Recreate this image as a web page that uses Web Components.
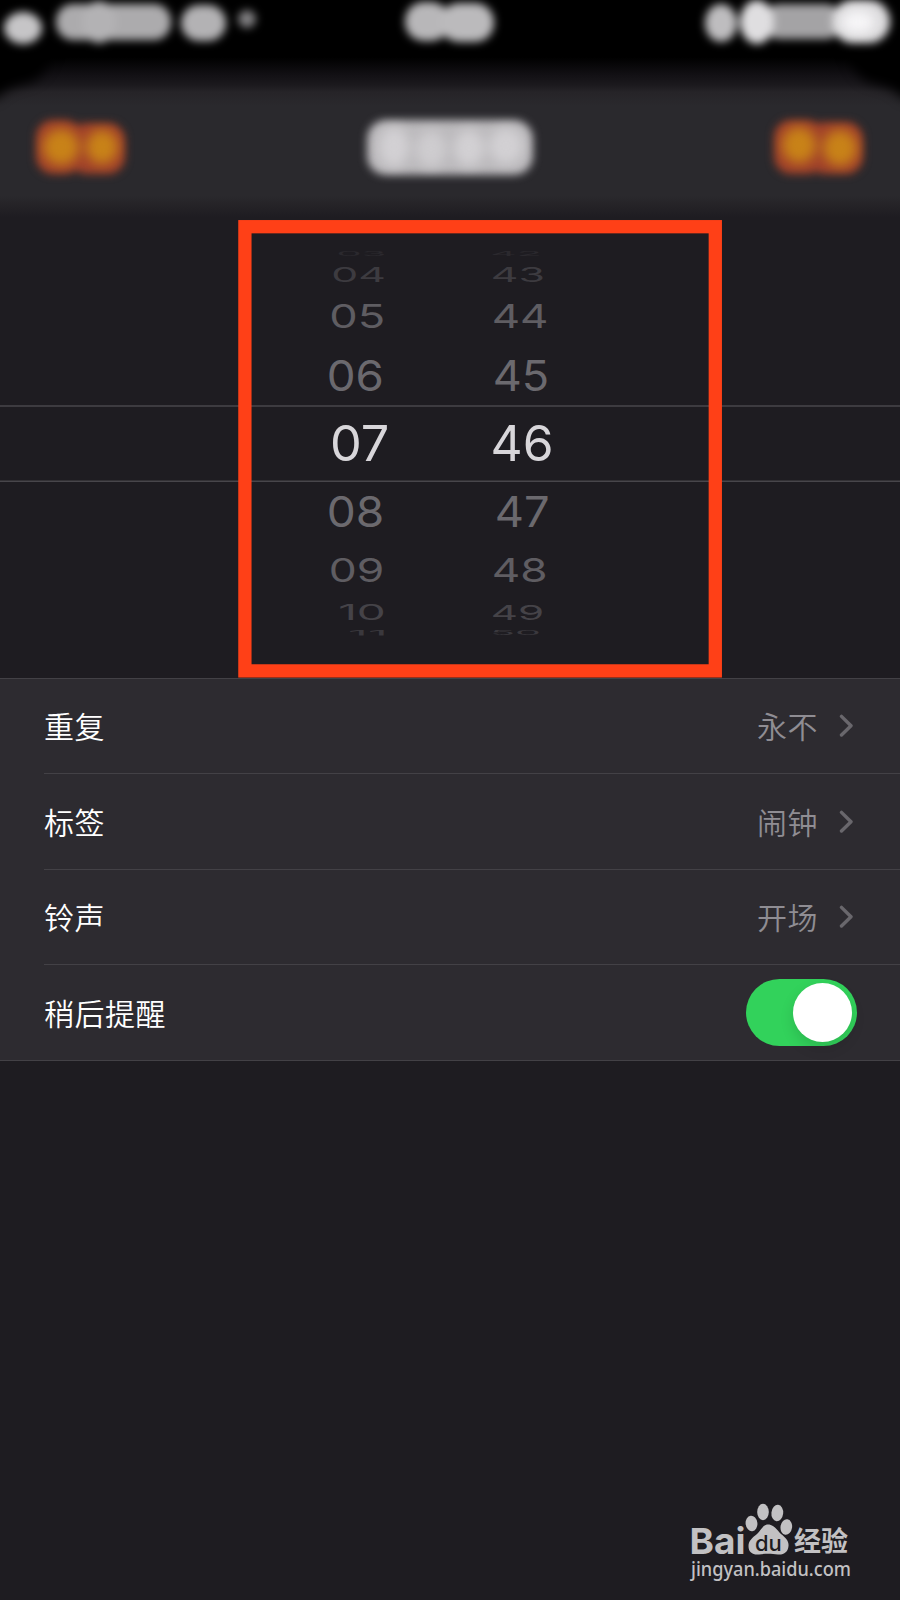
<!DOCTYPE html>
<html lang="zh-CN">
<head>
<meta charset="utf-8">
<title>闹钟</title>
<style>
  body {
    margin: 0;
    background: #1e1c21;
    font-family: "Noto Sans CJK SC", sans-serif;
    color: #fff;
  }
</style>
</head>
<body>
<alarm-screen></alarm-screen>

<script>
class SheetHeader extends HTMLElement {
  constructor() {
    super();
    this.attachShadow({ mode: "open" });
  }

  connectedCallback() {
    this.shadowRoot.innerHTML = `
      <style>
        :host { display: block; height: 220px; overflow: hidden; }
        svg { display: block; }
        filter { color-interpolation-filters: sRGB; }
      </style>
      <svg width="900" height="220" viewBox="0 0 900 220">
        <defs>
          <linearGradient id="sheet" x1="0" y1="0" x2="0" y2="1">
            <stop offset="0" stop-color="#000"/>
            <stop offset=".26" stop-color="#000"/>
            <stop offset=".34" stop-color="#121014"/>
            <stop offset=".385" stop-color="#1b191d"/>
            <stop offset=".42" stop-color="#262428"/>
            <stop offset=".48" stop-color="#2a292d"/>
            <stop offset=".89" stop-color="#2a292d"/>
            <stop offset=".94" stop-color="#242226"/>
            <stop offset=".99" stop-color="#1e1c21"/>
            <stop offset="1" stop-color="#1e1c21"/>
          </linearGradient>
          <filter id="soft" x="-30%" y="-50%" width="160%" height="200%"><feGaussianBlur stdDeviation="4.5"/></filter>
          <filter id="edge" x="-100%" y="-100%" width="300%" height="300%"><feGaussianBlur stdDeviation="6"/></filter>
          <filter id="glow" x="-50%" y="-50%" width="200%" height="200%"><feGaussianBlur stdDeviation="6"/></filter>
        </defs>
        <rect width="900" height="220" fill="url(#sheet)"/>
        <g filter="url(#edge)">
          <path d="M-30 40H56Q48 78 28 83Q8 86 -4 99H-30Z"/>
          <path d="M930 40H844Q852 78 872 83Q892 86 904 99H930Z"/>
        </g>
        <!-- status bar -->
        <g filter="url(#soft)">
          <ellipse cx="23" cy="28" rx="19" ry="16" fill="#c6c5c7"/>
          <rect x="56" y="4" width="115" height="36" rx="17" fill="#acabad"/>
          <ellipse cx="99" cy="22" rx="17" ry="21" fill="#b3b2b4"/>
          <rect x="181" y="5" width="45" height="36" rx="18" fill="#b3b2b4"/>
          <circle cx="247" cy="19" r="9" fill="#807f81"/>
          <rect x="405" y="2" width="45" height="39" rx="19" fill="#b8b7b9"/>
          <rect x="440" y="3" width="54" height="39" rx="19" fill="#bbbabc"/>
          <ellipse cx="721" cy="23" rx="16" ry="19" fill="#bebdbf"/>
          <rect x="765" y="4" width="75" height="35" rx="14" fill="#a4a3a5"/>
          <ellipse cx="757" cy="22" rx="17" ry="22" fill="#dfdee0"/>
          <rect x="832" y="0" width="58" height="43" rx="21" fill="#dcdbdd"/>
        </g>
        <ellipse cx="858" cy="22" rx="17" ry="12" fill="#f6f5f7" filter="url(#glow)"/>
        <!-- cancel / title / save -->
        <g filter="url(#soft)">
          <rect x="36" y="120" width="46" height="54" rx="17" fill="#a2422a"/>
          <rect x="70" y="123" width="55" height="51" rx="17" fill="#a2422a"/>
          <rect x="774" y="120" width="50" height="54" rx="17" fill="#a2422a"/>
          <rect x="808" y="122" width="55" height="52" rx="17" fill="#a2422a"/>
          <rect x="367" y="120" width="166" height="55" rx="19" fill="#bcbabd"/>
        </g>
        <g filter="url(#glow)">
          <ellipse cx="394" cy="147" rx="15" ry="20" fill="#d2d0d3"/>
          <ellipse cx="431" cy="149" rx="15" ry="18" fill="#cecccf"/>
          <ellipse cx="469" cy="148" rx="15" ry="18" fill="#d2d0d3"/>
          <ellipse cx="506" cy="146" rx="17" ry="18" fill="#d2d0d3"/>
        </g>
        <g filter="url(#glow)" fill="#c88218">
          <ellipse cx="61" cy="147" rx="18" ry="18"/>
          <ellipse cx="102" cy="147" rx="16" ry="17"/>
          <ellipse cx="799" cy="145" rx="17" ry="18"/>
          <ellipse cx="840" cy="148" rx="17" ry="18"/>
        </g>
      </svg>`;
  }
}

// Ink box of every number on the wheel: [text, left, right, top, bottom, colour]
const HOURS = [
  ["03", 338, 384, 250.5, 255.5, "#2b292e"],
  ["04", 333, 384, 266.5, 281.5, "#3d3b40"],
  ["05", 331, 383, 303.5, 328, "#5f5d62"],
  ["06", 328.5, 382, 359.5, 390.5, "#6b696e"],
  ["07", 332, 387, 424.5, 461, "#d8d6da"],
  ["08", 328.5, 381.5, 495.5, 527, "#6b696e"],
  ["09", 330.5, 382.5, 557.5, 582, "#5f5d62"],
  ["10", 340, 383.5, 604, 619.5, "#454348"],
  ["11", 350, 383.5, 630, 637, "#3a383d"]
];
const MINUTES = [
  ["42", 492, 539, 250.5, 255.5, "#2b292e"],
  ["43", 492.5, 542.5, 266.5, 281.5, "#3d3b40"],
  ["44", 493.5, 546.5, 303.5, 328, "#5f5d62"],
  ["45", 494.5, 547, 359.5, 390.5, "#6b696e"],
  ["46", 492.5, 551.5, 424.5, 461, "#d8d6da"],
  ["47", 496.5, 547.5, 495.5, 527, "#6b696e"],
  ["48", 493.5, 545, 557.5, 582, "#5f5d62"],
  ["49", 492.5, 542.5, 604, 619.5, "#454348"],
  ["50", 492.5, 539, 630, 635, "#3a383d"]
];

class TimeWheel extends HTMLElement {
  constructor() {
    super();
    this.attachShadow({ mode: "open" });
  }

  connectedCallback() {
    const ctx = document.createElement("canvas").getContext("2d");
    ctx.font = '50px Inter, "Liberation Sans"';
    const label = ([text, left, right, top, bottom, color]) => {
      const m = ctx.measureText(text);
      const sx = (right - left) / (m.actualBoundingBoxRight + m.actualBoundingBoxLeft);
      const sy = (bottom - top) / (m.actualBoundingBoxAscent + m.actualBoundingBoxDescent);
      const x = left + m.actualBoundingBoxLeft * sx;
      const y = bottom - 220 - m.actualBoundingBoxDescent * sy;
      return `<text transform="translate(${x} ${y}) scale(${sx} ${sy})" fill="${color}">${text}</text>`;
    };

    this.shadowRoot.innerHTML = `
      <style>
        :host { display: block; height: 458px; }
        svg { display: block; }
        text { font: 50px Inter, "Liberation Sans", sans-serif; }
      </style>
      <svg width="900" height="458" viewBox="0 0 900 458">
        <clipPath id="drum"><rect y="20" width="900" height="395.5"/></clipPath>
        <path d="M0 186H900M0 261.2H900" stroke="#48464b" stroke-width="1.6"/>
        <g clip-path="url(#drum)">
          ${HOURS.map(label).join("")}
          ${MINUTES.map(label).join("")}
        </g>
        <rect x="244.9" y="6.7" width="470.4" height="444.2" fill="none" stroke="#ff4017" stroke-width="13.3"/>
      </svg>`;
  }
}

class SettingRow extends HTMLElement {
  constructor() {
    super();
    this.attachShadow({ mode: "open" });
  }

  connectedCallback() {
    this.shadowRoot.innerHTML = `
      <style>
        :host {
          display: flex;
          align-items: center;
          box-sizing: border-box;
          height: 95.4px;
          margin-left: 44px;
          padding-right: 44px;
          border-bottom: 1px solid #434146;
          font-size: 30px;
          font-weight: 350;
          letter-spacing: .5px;
          line-height: 44px;
        }
        :host(:last-of-type) { border-bottom: none; }
        .label { flex: 1; padding-bottom: 2px; }
        ::slotted(span) { color: #8f8d93; padding-bottom: 2px; }
      </style>
      <div class="label">${this.getAttribute("label")}</div>
      <slot></slot>`;
  }
}

class ChevronIcon extends HTMLElement {
  constructor() {
    super();
    this.attachShadow({ mode: "open" });
  }

  connectedCallback() {
    this.shadowRoot.innerHTML = `
      <style>
        :host { display: block; margin: 0 2px 0 21px; }
        svg { display: block; }
      </style>
      <svg width="15" height="24" viewBox="0 0 15 24" fill="none" stroke="#69676c" stroke-width="3.4" stroke-linecap="round" stroke-linejoin="round">
        <path d="M2.5 2.4L12 11.7L2.500 21"/>
      </svg>`;
  }
}

class ToggleSwitch extends HTMLElement {
  constructor() {
    super();
    this.attachShadow({ mode: "open" });
  }

  connectedCallback() {
    this.shadowRoot.innerHTML = `
      <style>
        :host {
          display: flex;
          justify-content: flex-end;
          box-sizing: border-box;
          width: 111px;
          height: 67px;
          padding: 4px 5px 4px 4px;
          margin-right: -1px;
          border-radius: 34px;
          background: #32d25b;
        }
        .knob {
          width: 59px;
          height: 59px;
          border-radius: 50%;
          background: #fff;
          box-shadow: 0 6px 14px rgba(0, 0, 0, .13);
        }
      </style>
      <div class="knob"></div>`;
  }
}

class BaiduMark extends HTMLElement {
  constructor() {
    super();
    this.attachShadow({ mode: "open" });
  }

  connectedCallback() {
    this.shadowRoot.innerHTML = `
      <style>
        :host { display: block; }
        svg { display: block; }
        .bai { font: bold 36px Inter, "Liberation Sans", sans-serif; }
        .du { font: 500 22px Inter, "Liberation Sans", sans-serif; }
        .cn { font: bold 27px "Noto Sans CJK SC", sans-serif; }
        .url { font: 500 20px "Noto Sans", sans-serif; }
      </style>
      <svg width="180" height="90" viewBox="685 1500 180 90" fill="#c2c1c3">
        <text class="bai" x="689.5" y="1553.5" textLength="56" lengthAdjust="spacingAndGlyphs">Bai</text>
        <ellipse cx="751.5" cy="1523.5" rx="5.9" ry="7.8" transform="rotate(-6 751 1523.5)"/>
        <ellipse cx="763" cy="1512" rx="5.8" ry="8.2"/>
        <ellipse cx="777.3" cy="1513" rx="5.9" ry="8.2" transform="rotate(6 777.3 1513)"/>
        <ellipse cx="786.3" cy="1527" rx="5.8" ry="7.8" transform="rotate(8 786 1527)"/>
        <path d="M768 1524.5C774 1524.5 777 1530 781 1534C786 1538 789 1541 788.5 1546C788 1552 784 1555 778 1554.5C771 1553.5 766 1553.5 759 1554.5C752 1555 748.5 1552 748.5 1546C748.5 1541 752 1538 757 1534C761 1530 763 1524.5 768 1524.5Z"/>
        <text class="du" x="755" y="1550.5" fill="#1e1c21">du</text>
        <text class="cn" x="794" y="1551" textLength="54" lengthAdjust="spacingAndGlyphs">经验</text>
        <text class="url" x="691" y="1576" textLength="160" lengthAdjust="spacingAndGlyphs">jingyan.baidu.com</text>
      </svg>`;
  }
}

class AlarmScreen extends HTMLElement {
  constructor() {
    super();
    this.attachShadow({ mode: "open" });
  }

  connectedCallback() {
    this.shadowRoot.innerHTML = `
      <style>
        :host {
          display: flex;
          flex-direction: column;
          width: 900px;
          height: 1600px;
          overflow: hidden;
          background: #1e1c21;
        }
        .list {
          box-sizing: border-box;
          height: 383px;
          background: #2d2b30;
          border-top: 1px solid #434146;
          border-bottom: 1px solid #434146;
        }
        footer {
          display: flex;
          flex: 1;
          align-items: flex-end;
          justify-content: flex-end;
          padding: 0 35px 10px 0;
        }
      </style>
      <sheet-header></sheet-header>
      <time-wheel></time-wheel>
      <div class="list">
        <setting-row label="重复"><span>永不</span><chevron-icon></chevron-icon></setting-row>
        <setting-row label="标签"><span>闹钟</span><chevron-icon></chevron-icon></setting-row>
        <setting-row label="铃声"><span>开场</span><chevron-icon></chevron-icon></setting-row>
        <setting-row label="稍后提醒"><toggle-switch></toggle-switch></setting-row>
      </div>
      <footer><baidu-mark></baidu-mark></footer>`;
  }
}

customElements.define("sheet-header", SheetHeader);
customElements.define("time-wheel", TimeWheel);
customElements.define("setting-row", SettingRow);
customElements.define("chevron-icon", ChevronIcon);
customElements.define("toggle-switch", ToggleSwitch);
customElements.define("baidu-mark", BaiduMark);
customElements.define("alarm-screen", AlarmScreen);
</script>
</body>
</html>
